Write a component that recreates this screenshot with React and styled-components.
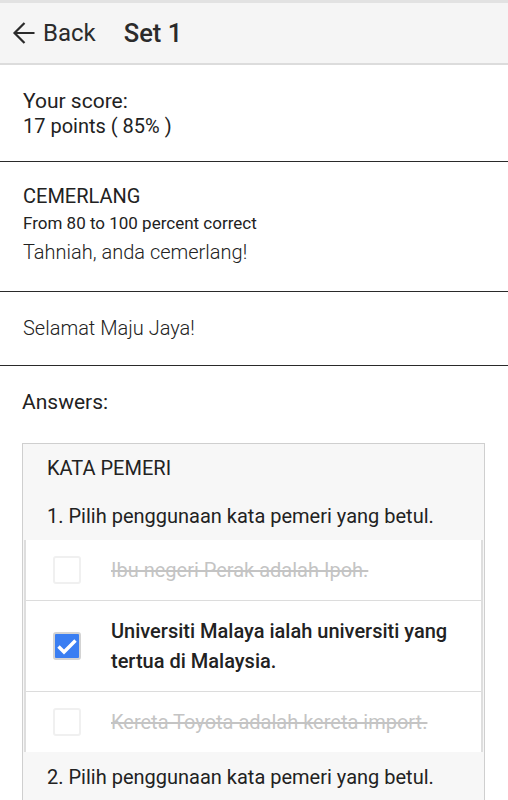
import React from "react";
import styled, { createGlobalStyle } from "styled-components";

const GlobalStyle = createGlobalStyle`
  body {
    margin: 0;
    background: #fff;
    font-family: Roboto, "Liberation Sans", sans-serif;
    color: #222;
  }
`;

const options = [
  { text: "Ibu negeri Perak adalah Ipoh.", checked: false },
  {
    text: "Universiti Malaya ialah universiti yang tertua di Malaysia.",
    checked: true
  },
  { text: "Kereta Toyota adalah kereta import.", checked: false }
];

const App = () => (
  <Page>
    <GlobalStyle />
    <TopBar>
      <BackButton>
        <svg width="24" height="24" viewBox="0 0 24 24">
          <path
            d="M22.5 12H2.5M12.5 2L2.5 12l10 10"
            fill="none"
            stroke="#2b2b2b"
            strokeWidth="2.2"
          />
        </svg>
        Back
      </BackButton>
      <Title>Set 1</Title>
    </TopBar>

    <Section pad="24px 23px 22px">
      <Line size="21px">Your score:</Line>
      <Line>17 points ( 85% )</Line>
    </Section>

    <Section pad="21px 23px 24px">
      <Line lh="26px">CEMERLANG</Line>
      <Small>From 80 to 100 percent correct</Small>
      <Line lh="30px" light>
        Tahniah, anda cemerlang!
      </Line>
    </Section>

    <Section pad="24px 23px 24px">
      <Line light>Selamat Maju Jaya!</Line>
    </Section>

    <Answers>
      <Line size="21px">Answers:</Line>
      <Card>
        <CardTitle>KATA PEMERI</CardTitle>
        <Question>1. Pilih penggunaan kata pemeri yang betul.</Question>
        <OptionList>
          {options.map(o => (
            <OptionRow key={o.text}>
              <CheckBox checked={o.checked}>
                {o.checked && (
                  <svg width="24" height="24" viewBox="0 0 24 24">
                    <path
                      d="M3.5 12.5l5.5 5.5 11.5-11.5"
                      fill="none"
                      stroke="#fff"
                      strokeWidth="3.4"
                    />
                  </svg>
                )}
              </CheckBox>
              <OptionText checked={o.checked}>{o.text}</OptionText>
            </OptionRow>
          ))}
        </OptionList>
        <Question top="10px">2. Pilih penggunaan kata pemeri yang betul.</Question>
      </Card>
    </Answers>
  </Page>
);

const Page = styled.div`
  width: 508px;
  height: 800px;
  overflow: hidden;
  border-top: 3px solid #e2e2e2;
  box-sizing: border-box;
`;

const TopBar = styled.header`
  display: flex;
  align-items: center;
  gap: 28px;
  height: 60px;
  padding: 0 12px;
  background: #f5f5f5;
  border-bottom: 2px solid #dcdcdc;
`;

const BackButton = styled.div`
  display: flex;
  align-items: center;
  gap: 7px;
  font-size: 24px;
  color: #2b2b2b;
  svg {
    flex: none;
  }
`;

const Title = styled.div`
  font-size: 25.5px;
  font-weight: 500;
  color: #2b2b2b;
`;

const Section = styled.section`
  padding: ${p => p.pad};
  border-bottom: 1px solid #2a2a2a;
`;

const Line = styled.div`
  font-size: ${p => p.size || "20px"};
  line-height: ${p => p.lh || "25px"};
  font-weight: ${p => (p.light ? 300 : 400)};
`;

const Small = styled.div`
  font-size: 17px;
  line-height: 28px;
`;

const Answers = styled.section`
  padding: 24px 23px 0 22px;
`;

const Card = styled.div`
  margin-top: 28px;
  background: #f7f7f7;
  border: 1px solid #cfcfcf;
  border-bottom: none;
`;

const CardTitle = styled.div`
  padding: 9px 24px 0;
  font-size: 20px;
  line-height: 30px;
`;

const Question = styled.div`
  padding: ${p => p.top || "18px"} 24px 9px;
  font-size: 20px;
  line-height: 30px;
`;

const OptionList = styled.div`
  margin: 0 1px;
  background: #fff;
  border-left: 2px solid #dedede;
  border-right: 2px solid #dedede;
`;

const OptionRow = styled.div`
  display: flex;
  align-items: center;
  gap: 30px;
  padding: 15px 20px 15px 27px;
  border-bottom: 1px solid #dcdcdc;
  &:last-child {
    border-bottom: none;
  }
`;

const CheckBox = styled.div`
  flex: none;
  width: 28px;
  height: 28px;
  box-sizing: border-box;
  border-radius: 3px;
  border: 2px solid ${p => (p.checked ? "#d3d3d3" : "#f0f0f0")};
  background: ${p => (p.checked ? "#3a7ef2" : "#fff")};
  display: flex;
  align-items: center;
  justify-content: center;
`;

const OptionText = styled.div`
  font-size: 20px;
  line-height: 30px;
  font-weight: ${p => (p.checked ? 500 : 400)};
  color: ${p => (p.checked ? "#222" : "#c4c4c4")};
  text-decoration: ${p => (p.checked ? "none" : "line-through")};
`;

export default App;
